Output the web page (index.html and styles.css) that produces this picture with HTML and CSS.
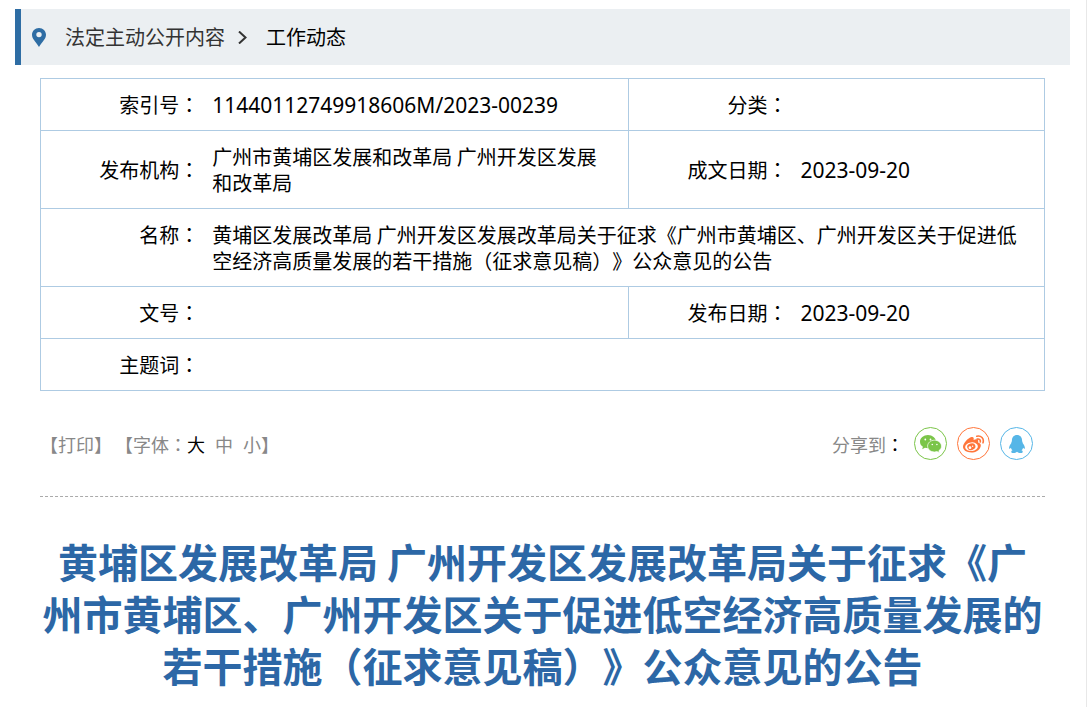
FILE: index.html
```html
<!DOCTYPE html>
<html lang="zh-CN">

<head>
    <meta charset="UTF-8">
    <meta name="viewport" content="width=device-width, initial-scale=1.0">
    <title>工作动态</title>
    <link rel="stylesheet" href="styles.css">
</head>

<body>
    <div class="page">
        <nav class="breadcrumb">
            <svg class="pin" viewBox="0 0 14 19" width="14" height="19" aria-hidden="true">
                <path fill="#2e6da4" fill-rule="evenodd" d="M7 0C3 0 0 3 0 6.800C0 11 3.500 13.500 7 19C10.500 13.500 14 11 14 6.800C14 3 11 0 7 0ZM7 3.900a2.700 2.700 0 1 1 0 5.400a2.700 2.700 0 0 1 0-5.400Z"/>
            </svg>
            <a href="#">法定主动公开内容</a>
            <svg class="arrow" viewBox="0 0 9 13" width="9" height="13" aria-hidden="true">
                <path fill="none" stroke="#333" stroke-width="2" d="M1 0.500L7.500 6.500L1 12.500"/>
            </svg>
            <a href="#" class="current">工作动态</a>
        </nav>

        <table class="info">
            <colgroup>
                <col class="col-label">
                <col class="col-main">
                <col class="col-label">
                <col class="col-side">
            </colgroup>
            <tr>
                <th scope="row">索引号<span class="colon" lang="zh-TW">：</span></th>
                <td class="num">11440112749918606M/2023-00239</td>
                <th scope="row">分类<span class="colon" lang="zh-TW">：</span></th>
                <td></td>
            </tr>
            <tr>
                <th scope="row">发布机构<span class="colon" lang="zh-TW">：</span></th>
                <td>广州市黄埔区发展和改革局 广州开发区发展和改革局</td>
                <th scope="row">成文日期<span class="colon" lang="zh-TW">：</span></th>
                <td class="num">2023-09-20</td>
            </tr>
            <tr>
                <th scope="row" class="top">名称<span class="colon" lang="zh-TW">：</span></th>
                <td colspan="3">黄埔区发展改革局 广州开发区发展改革局关于征求《广州市黄埔区、广州开发区关于促进低空经济高质量发展的若干措施（征求意见稿）》公众意见的公告</td>
            </tr>
            <tr>
                <th scope="row">文号<span class="colon" lang="zh-TW">：</span></th>
                <td></td>
                <th scope="row">发布日期<span class="colon" lang="zh-TW">：</span></th>
                <td class="num">2023-09-20</td>
            </tr>
            <tr>
                <th scope="row">主题词<span class="colon" lang="zh-TW">：</span></th>
                <td colspan="3"></td>
            </tr>
        </table>

        <div class="toolbar">
            <div class="tools">
                <button type="button">【打印】</button>
                <div class="font-size">
                    <span>【字体<span class="colon" lang="zh-TW">：</span></span>
                    <button type="button" class="active">大</button>
                    <button type="button">中</button>
                    <button type="button">小</button>
                    <span>】</span>
                </div>
            </div>
            <div class="share">
                <span class="share-label">分享到<span class="colon" lang="zh-TW">：</span></span>
                <a href="#" class="wechat" aria-label="微信">
                    <svg viewBox="0 0 22 18" width="22" height="18" aria-hidden="true">
                        <path fill="currentColor" d="M8 0C3.500 0 0 3 0 6.700C0 8.800 1.100 10.600 2.900 11.800L2.200 14.200L5 12.800C6 13.100 7 13.300 8.100 13.300C12.500 13.300 16 10.300 16 6.700C16 3 12.400 0 8 0Z"/>
                        <path fill="currentColor" stroke="#fff" stroke-width="0.700" d="M14.500 5.200C10.600 5.200 7.600 7.900 7.600 11.100C7.600 14.400 10.600 17 14.500 17L17 16.600L19.400 17.800L18.800 15.800C20.500 14.700 21.500 13 21.500 11.100C21.500 7.900 18.400 5.200 14.500 5.200Z"/>
                        <circle cx="5.300" cy="4.500" r="0.900" fill="#fff"/>
                        <circle cx="10.500" cy="4.500" r="0.900" fill="#fff"/>
                        <circle cx="12.300" cy="9.500" r="0.800" fill="#fff"/>
                        <circle cx="16.900" cy="9.500" r="0.800" fill="#fff"/>
                    </svg>
                </a>
                <a href="#" class="weibo" aria-label="微博">
                    <svg viewBox="0 0 22 18" width="22" height="18" aria-hidden="true">
                        <path fill="currentColor" d="M8.500 2C10.300 1.600 11.200 2.700 10.600 4.900C13.300 3.800 15.600 4 15.200 6.800C15.100 7.400 15.200 7.700 16 8C17.700 8.600 18.200 10 17.600 11.700C16.400 15.300 12.500 17.500 8.300 17.500C3.700 17.500 0 15.300 0 11.800C0 8.400 5 2.800 8.500 2Z"/>
                        <ellipse cx="8.500" cy="11.700" rx="6.400" ry="4.300" fill="#fff" transform="rotate(-7 8.500 11.700)"/>
                        <ellipse cx="8.300" cy="11.700" rx="4.200" ry="3.300" fill="currentColor" transform="rotate(-15 8.300 11.700)"/>
                        <circle cx="7" cy="12.700" r="1.400" fill="#fff"/>
                        <circle cx="9.600" cy="11.300" r="0.700" fill="#fff"/>
                        <path fill="none" stroke="currentColor" stroke-width="1.600" stroke-linecap="round" d="M13.800 1.200C18 0.200 21.400 3.500 20 7.800M14.200 4.100C16.300 3.600 17.900 5 17.200 7"/>
                    </svg>
                </a>
                <a href="#" class="qq" aria-label="QQ">
                    <svg viewBox="0 0 16 18" width="16" height="18" aria-hidden="true">
                        <path fill="currentColor" d="M8 0C4.700 0 2.800 2.500 2.900 5.800C2.900 6.700 2.300 7.200 2.200 8.200C0.800 10 0 11.900 0.100 13.200C0.200 14.200 1.100 13.800 1.900 12.700C2.100 13.800 2.700 14.600 3.500 15.300C1.600 16 1.900 18 4.200 18C6 18 7.200 17.500 8 16.700C8.800 17.500 10 18 11.800 18C14.100 18 14.400 16 12.500 15.300C13.300 14.600 13.900 13.800 14.100 12.700C14.900 13.800 15.800 14.200 15.900 13.200C16 11.900 15.200 10 13.800 8.200C13.700 7.200 13.100 6.700 13.100 5.800C13.200 2.500 11.300 0 8 0Z"/>
                    </svg>
                </a>
            </div>
        </div>

        <h1 class="title">黄埔区发展改革局 广州开发区发展改革局关于征求《广州市黄埔区、广州开发区关于促进低空经济高质量发展的若干措施（征求意见稿）》公众意见的公告</h1>
    </div>
</body>

</html>
```

FILE: styles.css
```css
body {
    margin: 0;
    font-family: "Noto Sans CJK SC", sans-serif;
    font-size: 20px;
    line-height: 26px;
    text-spacing-trim: space-all;
    color: #000;
    background-color: #fff;
}

a {
    color: inherit;
    text-decoration: none;
}

button {
    padding: 0;
    border: none;
    background: none;
    font: inherit;
    color: inherit;
    cursor: pointer;
}

.page {
    box-sizing: border-box;
    min-height: 100vh;
    padding-top: 9px;
    border-right: 1px solid #e8e8e8;
    overflow: hidden;
}

/* full-width colon centred in its box */
.colon {
    font-family: "Noto Sans CJK TC", sans-serif;
}

.breadcrumb {
    display: flex;
    align-items: center;
    height: 56px;
    margin: 0 16px 0 15px;
    padding-left: 11px;
    border-left: 6px solid #2e6da4;
    background-color: #ebeff2;
    color: #333;
}

.pin {
    margin-right: 19px;
}

.arrow {
    margin: 0 19px 0 13px;
}

.breadcrumb .current {
    color: #000;
}

.info {
    width: calc(100% - 81px);
    margin: 13px 41px 0 40px;
    border: 1px solid #aecbe3;
    border-collapse: collapse;
    table-layout: fixed;
}

.col-label {
    width: 16.5%;
}

.col-main {
    width: 42.1%;
}

.col-side {
    width: 24.9%;
}

.info tr {
    border-bottom: 1px solid #aecbe3;
}

.info th,
.info td {
    height: 26px;
    padding: 13px 20px 12px 6px;
}

.info th {
    padding-right: 7px;
    border-left: 1px solid #aecbe3;
    font-weight: normal;
    text-align: right;
}

.info .top {
    vertical-align: top;
}

.info .num {
    font-family: "Noto Sans", sans-serif;
    font-size: 21px;
}

.toolbar {
    display: flex;
    justify-content: space-between;
    align-items: center;
    height: 105px;
    margin: 0 41px 0 40px;
    border-bottom: 1px dashed #aaa;
    font-size: 18px;
    color: #888;
}

.tools,
.font-size,
.share {
    display: flex;
    align-items: center;
}

.tools {
    gap: 3px;
}

.font-size button {
    margin-right: 10px;
}

.font-size button:last-of-type {
    margin-right: 0;
}

.font-size .active {
    color: #000;
}

.share {
    gap: 10px;
    padding-right: 12px;
}

.share .colon {
    color: #000;
}

.share a {
    display: flex;
    align-items: center;
    justify-content: center;
    width: 31px;
    height: 31px;
    border: 1px solid currentColor;
    border-radius: 50%;
}

.wechat {
    color: #7bc549;
}

.weibo {
    color: #ff763b;
}

.qq {
    color: #56b6e7;
}

.title {
    margin: 38px 41px 0 40px;
    font-size: 40px;
    line-height: 52px;
    text-align: center;
    color: #2c67a6;
}
```
